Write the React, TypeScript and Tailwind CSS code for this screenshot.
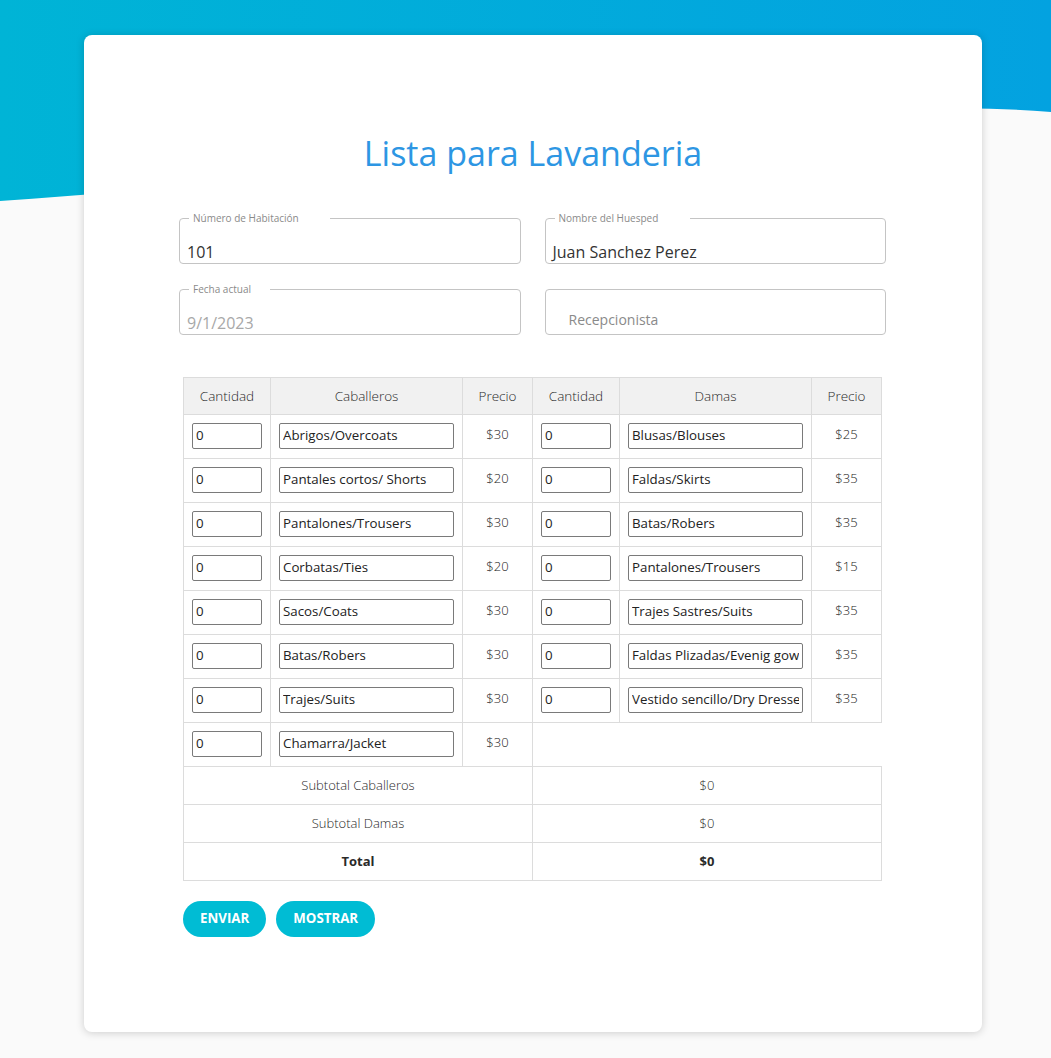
import React from "react";

const men = [
  ["Abrigos/Overcoats", "$30"],
  ["Pantales cortos/ Shorts", "$20"],
  ["Pantalones/Trousers", "$30"],
  ["Corbatas/Ties", "$20"],
  ["Sacos/Coats", "$30"],
  ["Batas/Robers", "$30"],
  ["Trajes/Suits", "$30"],
  ["Chamarra/Jacket", "$30"],
];
const women = [
  ["Blusas/Blouses", "$25"],
  ["Faldas/Skirts", "$35"],
  ["Batas/Robers", "$35"],
  ["Pantalones/Trousers", "$15"],
  ["Trajes Sastres/Suits", "$35"],
  ["Faldas Plizadas/Evenig gowns", "$35"],
  ["Vestido sencillo/Dry Dresses", "$35"],
];

function Field({
  label,
  value,
  notch,
  gray,
}: {
  label: string;
  value: string;
  notch: number;
  gray?: boolean;
}) {
  return (
    <div className="relative h-[46px] rounded-[4px] border border-[#c4c4c4]">
      <span
        className="absolute left-[9px] top-[-8px] bg-white pl-[4px] text-[10px] leading-[14px] text-[#8a8a8a]"
        style={{ width: notch }}
      >
        {label}
      </span>
      <div
        className={
          "absolute left-[7px] top-[22px] text-[16px] leading-[22px] " +
          (gray ? "text-[#a8a8a8]" : "text-[#333]")
        }
      >
        {value}
      </div>
    </div>
  );
}

function Cell({
  children,
  className = "",
  colSpan,
}: {
  children?: React.ReactNode;
  className?: string;
  colSpan?: number;
}) {
  return (
    <td colSpan={colSpan} className={"border border-[#dcdcdc] p-0 " + className}>
      {children}
    </td>
  );
}

function QtyInput() {
  return (
    <div className="mb-[2px] ml-[8px] flex h-[26px] w-[70px] items-center rounded-[2px] border border-[#7a7a7a] pl-[3px] text-[13.3px] text-[#222]">
      0
    </div>
  );
}

function ItemInput({ v }: { v: string }) {
  return (
    <div className="mb-[2px] ml-[8px] flex h-[26px] w-[175px] items-center rounded-[2px] border border-[#7a7a7a] px-[3px] text-[13.3px] text-[#222]">
      <span className="block w-full overflow-hidden whitespace-nowrap">{v}</span>
    </div>
  );
}

export default function App() {
  return (
    <div
      className="relative min-h-[1058px] w-full overflow-hidden bg-[#fafafa]"
      style={{ fontFamily: '"Open Sans", "Noto Sans", sans-serif' }}
    >
      <svg
        className="absolute left-0 top-0 h-[210px] w-full"
        viewBox="0 0 1051 210"
        preserveAspectRatio="none"
      >
        <defs>
          <linearGradient id="g" x1="0" y1="0" x2="1" y2="0">
            <stop offset="0" stopColor="#00b4d6" />
            <stop offset="1" stopColor="#03a2e0" />
          </linearGradient>
        </defs>
        <path d="M0 0 H1051 V112 C800 90 400 175 0 201 Z" fill="url(#g)" />
      </svg>

      <div className="relative pt-[35px] pb-[26px]">
        <div className="ml-[84px] h-[997px] w-[898px] rounded-[8px] bg-white shadow-[0_1px_8px_rgba(0,0,0,0.18)]">
          <h1 className="pt-[95px] text-center text-[34px] font-normal leading-[46px] text-[#2d96e3]">
            Lista para Lavanderia
          </h1>

          <div className="ml-[95px] mt-[42px] grid w-[707px] grid-cols-2 gap-x-[24px] gap-y-[25px]">
            <Field label="Número de Habitación" value="101" notch={141} />
            <Field label="Nombre del Huesped" value="Juan Sanchez Perez" notch={135} />
            <Field label="Fecha actual" value="9/1/2023" notch={81} gray />
            <div className="relative h-[46px] rounded-[4px] border border-[#c4c4c4]">
              <div className="absolute left-[23px] top-[20px] text-[14px] leading-[20px] text-[#8a8a8a]">
                Recepcionista
              </div>
            </div>
          </div>

          <table className="ml-[99px] mt-[42px] w-[698px] table-fixed border-collapse text-[#2a2a2a]">
            <colgroup>
              <col className="w-[87px]" />
              <col className="w-[192px]" />
              <col className="w-[70px]" />
              <col className="w-[87px]" />
              <col className="w-[192px]" />
              <col className="w-[70px]" />
            </colgroup>
            <thead>
              <tr className="h-[37px] bg-[#f1f1f1] text-[13.5px]">
                {["Cantidad", "Caballeros", "Precio", "Cantidad", "Damas", "Precio"].map((h, i) => (
                  <Cell key={i} className="text-center font-light">
                    {h}
                  </Cell>
                ))}
              </tr>
            </thead>
            <tbody>
              {men.map((m, i) => {
                const w = women[i];
                return (
                  <tr key={i} className="h-[44px]">
                    <Cell>
                      <QtyInput />
                    </Cell>
                    <Cell>
                      <ItemInput v={m[0]} />
                    </Cell>
                    <Cell className="pb-[3px] text-center text-[13px] font-light text-[#222]">{m[1]}</Cell>
                    {w ? (
                      <>
                        <Cell>
                          <QtyInput />
                        </Cell>
                        <Cell>
                          <ItemInput v={w[0]} />
                        </Cell>
                        <Cell className="pb-[3px] text-center text-[13px] font-light text-[#222]">{w[1]}</Cell>
                      </>
                    ) : (
                      <td colSpan={3} className="border-0 p-0" />
                    )}
                  </tr>
                );
              })}
              <tr className="h-[38px] text-[13px]">
                <Cell colSpan={3} className="text-center font-light">
                  Subtotal Caballeros
                </Cell>
                <Cell colSpan={3} className="text-center font-light">
                  $0
                </Cell>
              </tr>
              <tr className="h-[38px] text-[13px]">
                <Cell colSpan={3} className="text-center font-light">
                  Subtotal Damas
                </Cell>
                <Cell colSpan={3} className="text-center font-light">
                  $0
                </Cell>
              </tr>
              <tr className="h-[38px] text-[13px]">
                <Cell colSpan={3} className="text-center font-bold">
                  Total
                </Cell>
                <Cell colSpan={3} className="text-center font-bold">
                  $0
                </Cell>
              </tr>
            </tbody>
          </table>

          <div className="ml-[99px] mt-[20px] flex gap-[10px]">
            <button className="h-[36px] rounded-full bg-[#00bcd4] px-[17px] text-[13.3px] font-bold text-white">
              ENVIAR
            </button>
            <button className="h-[36px] rounded-full bg-[#00bcd4] px-[17px] text-[13.3px] font-bold text-white">
              MOSTRAR
            </button>
          </div>
        </div>
      </div>
    </div>
  );
}
